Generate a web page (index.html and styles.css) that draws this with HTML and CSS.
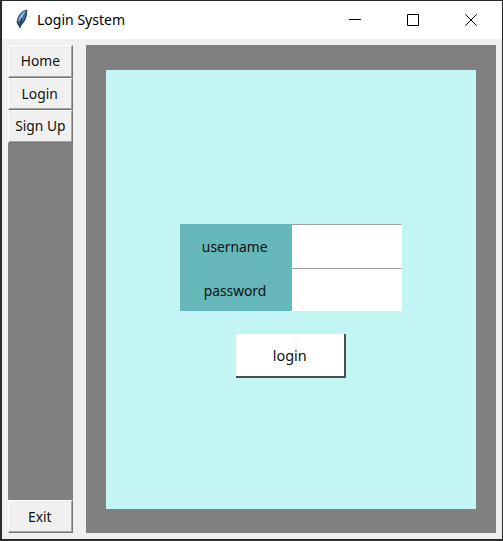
FILE: index.html
```
<!DOCTYPE html>
<html lang="en">
<head>
<meta charset="utf-8">
<title>Login System</title>
<link rel="stylesheet" href="styles.css">
</head>
<body>
<div class="window">
  <header class="titlebar">
    <svg class="feather" width="12" height="20" viewBox="0 0 12 20">
      <path d="M10.800 .5C5 1.500 .8 7 .8 13L2.500 17 4 19 5.500 16.500C9.500 12 11.500 7 10.800.5Z" fill="#3f6f9e"/>
      <path d="M9.500 1.800C5 4.500 2.500 9 2.500 12.500L6.500 8Z" fill="#8fb9dc"/>
      <path d="M10.700 1C11 7 8.500 12 5.500 15.500" fill="none" stroke="#20384f" stroke-width="1"/>
      <path d="M1 12.500L3 16.500M6 10C4.500 13 4 15 3.700 19" fill="none" stroke="#1b2935" stroke-width="1.100"/>
    </svg>
    <h1 class="title"><span class="t-title">Login System</span></h1>
    <div class="controls">
      <svg width="12" height="12" viewBox="0 0 12 12"><path d="M0 5.500H12"/></svg>
      <svg width="12" height="12" viewBox="0 0 12 12"><path d="M.5 .5H11.500V11.500H.5Z"/></svg>
      <svg width="12" height="12" viewBox="0 0 12 12"><path d="M.3 .3L11.700 11.700M11.700 .3L.3 11.700"/></svg>
    </div>
  </header>
  <div class="body">
    <nav class="sidebar">
      <button class="nav"><span class="text">Home</span></button>
      <button class="nav"><span class="text">Login</span></button>
      <button class="nav"><span class="text">Sign Up</span></button>
      <button class="nav exit"><span class="text">Exit</span></button>
    </nav>
    <main class="main">
      <div class="panel">
        <form class="form">
          <label class="label" for="u"><span class="text">username</span></label><input class="entry" id="u">
          <label class="label" for="p"><span class="text">password</span></label><input class="entry" id="p" type="password">
        </form>
        <button class="submit"><span class="text-wide">login</span></button>
      </div>
    </main>
  </div>
</div>
</body>
</html>
```
FILE: styles.css
```
* { box-sizing: border-box; }
body {
  margin: 0;
  height: 541px;
  padding: 1px 1px 2px 2px;
  background: #2b2b2e;
  font: 15px/20px "Noto Sans", "Open Sans", sans-serif;
  color: #101010;
  overflow: hidden;
}
.window { height: 538px; background: #f0f0f0; display: flex; flex-direction: column; }
.titlebar { height: 38px; background: #fff; display: flex; align-items: center; padding-left: 14px; }
.feather { flex: none; margin: 0 9px 2px 0; }
.title { margin: 0; padding-bottom: 2px; font: inherit; color: #000; }
.controls { display: flex; gap: 46px; margin-left: auto; padding-right: 25px; }
.controls svg { display: block; fill: none; stroke: #000; stroke-width: 1; }
.body { flex: 1; display: flex; gap: 13px; padding: 6px; }
.sidebar { width: 65px; height: 488px; background: #808080; display: flex; flex-direction: column; }
button { font: inherit; color: inherit; padding: 0; border-radius: 0; }
.nav {
  height: 32.500px;
  padding: 0 1px 2px 0;
  background: #f0f0f0;
  border: 1px solid;
  border-color: #fff #747474 #747474 #fff;
  box-shadow: inset -1px -1px #a8a8a8;
}
.exit { height: 33px; margin-top: auto; }
.main { width: 410px; height: 488px; background: #808080; padding: 25px 20px 24px; }
.panel { height: 439px; background: #c3f5f5; display: flex; flex-direction: column; align-items: center; padding-top: 154px; }
.form { display: grid; grid-template-columns: 111px 111px; grid-template-rows: 44px 43px; }
.label { background: #65b7ba; display: flex; align-items: center; justify-content: center; padding-right: 2px; }
.entry { width: 111px; height: 100%; padding: 2px; border: 1px solid; border-color: #a0a0a0 #fff #fff #a0a0a0; background: #fff; border-radius: 0; font: inherit; outline: 0; }
.submit { width: 110px; height: 44px; margin-top: 23px; background: #fff; border: 0 solid #3f5151; border-width: 0 2px 2px 0; }
.text, .text-wide, .t-title { display: inline-block; white-space: nowrap; }
.text { transform: scaleX(.92); }
.text-wide { transform: scaleX(.96); }
.t-title { transform-origin: left; transform: scaleX(.935); }
```
